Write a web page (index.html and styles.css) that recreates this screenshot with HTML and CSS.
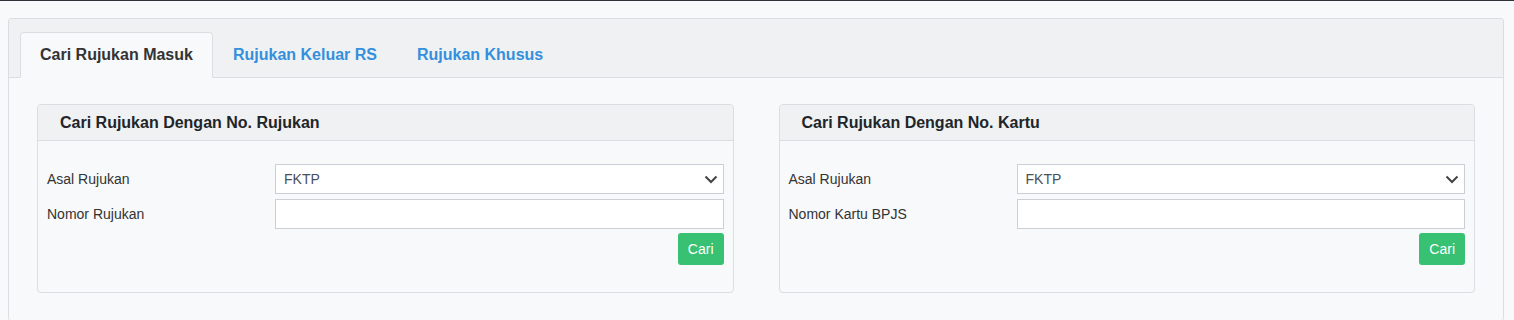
FILE: index.html
```html
<!DOCTYPE html>
<html lang="en">
<head>
  <meta charset="UTF-8" />
  <meta name="viewport" content="width=device-width, initial-scale=1.0"/>
  <title>Rujukan</title>
  <link rel="stylesheet" href="styles.css">
</head>
<body>
<div class="topbar"></div>

<div class="panel">
  <div class="panel-head">
    <ul class="tabs">
      <li class="tab active">Cari Rujukan Masuk</li>
      <li class="tab">Rujukan Keluar RS</li>
      <li class="tab">Rujukan Khusus</li>
    </ul>
  </div>

  <div class="panel-body">
    <div class="box">
      <div class="box-head">Cari Rujukan Dengan No. Rujukan</div>
      <div class="box-body">
        <div class="form-row">
          <label>Asal Rujukan</label>
          <div class="select">
            <span>FKTP</span>
            <svg width="14" height="9" viewBox="0 0 14 9"><path d="M1.5 1.5 L7 7 L12.5 1.5" fill="none" stroke="#444" stroke-width="2"/></svg>
          </div>
        </div>
        <div class="form-row">
          <label>Nomor Rujukan</label>
          <input type="text" class="input">
        </div>
        <div class="actions">
          <button class="btn">Cari</button>
        </div>
      </div>
    </div>

    <div class="box">
      <div class="box-head">Cari Rujukan Dengan No. Kartu</div>
      <div class="box-body">
        <div class="form-row">
          <label>Asal Rujukan</label>
          <div class="select">
            <span>FKTP</span>
            <svg width="14" height="9" viewBox="0 0 14 9"><path d="M1.5 1.5 L7 7 L12.5 1.5" fill="none" stroke="#444" stroke-width="2"/></svg>
          </div>
        </div>
        <div class="form-row">
          <label>Nomor Kartu BPJS</label>
          <input type="text" class="input">
        </div>
        <div class="actions">
          <button class="btn">Cari</button>
        </div>
      </div>
    </div>
  </div>
</div>
</body>
</html>
```

FILE: styles.css
```css
:root {
  --bg: #f8f9fb;
  --head: #f0f1f3;
  --border: #dcdde0;
  --blue: #3490dc;
  --green: #38c172;
  --text: #212529;
}

body {
  margin: 0;
  background: var(--bg);
  font-family: "Liberation Sans", Arial, sans-serif;
  color: var(--text);
}

.topbar {
  height: 1px;
  background: #2d3238;
}

.panel {
  margin: 17px 10px 0 8px;
  border: 1px solid var(--border);
  border-radius: 4px;
  border-bottom: none;
  height: 302px;
}

.panel-head {
  background: var(--head);
  border-bottom: 1px solid var(--border);
  border-radius: 4px 4px 0 0;
  padding: 13px 11px 0;
}

.tabs {
  display: flex;
  list-style: none;
  margin: 0 0 -1px;
  padding: 0;
}

.tab {
  padding: 0 19px;
  height: 44px;
  line-height: 44px;
  font-size: 16px;
  font-weight: bold;
  color: var(--blue);
  border: 1px solid transparent;
  border-radius: 4px 4px 0 0;
}

.tab.active {
  color: #333;
  background: var(--bg);
  border-color: var(--border);
  border-bottom-color: var(--bg);
}

.panel-body {
  display: grid;
  grid-template-columns: 1fr 1fr;
  gap: 45px;
  padding: 26px 28px 0 28px;
}

.box {
  border: 1px solid var(--border);
  border-radius: 4px;
}

.box-head {
  background: var(--head);
  border-bottom: 1px solid var(--border);
  border-radius: 4px 4px 0 0;
  height: 35px;
  line-height: 35px;
  padding-left: 22px;
  font-size: 16px;
  font-weight: bold;
}

.box-body {
  padding: 23px 9px 27px 9px;
}

.form-row {
  display: grid;
  grid-template-columns: 228px 1fr;
  align-items: center;
  margin-bottom: 5px;
  font-size: 14px;
  color: #333;
}

.select, .input {
  box-sizing: border-box;
  height: 30px;
  border: 1px solid #ccd0d6;
  background: #fff;
  border-radius: 0;
}

.select {
  display: flex;
  align-items: center;
  justify-content: space-between;
  padding: 0 5px 0 8px;
  color: #495057;
}

.input {
  width: 100%;
  margin: 0;
  font: inherit;
}

.actions {
  display: flex;
  justify-content: flex-end;
  margin-top: -1px;
}

.btn {
  height: 32px;
  padding: 0 10px;
  border: none;
  border-radius: 3px;
  background: var(--green);
  color: #fff;
  font-family: inherit;
  font-size: 14px;
}
```
